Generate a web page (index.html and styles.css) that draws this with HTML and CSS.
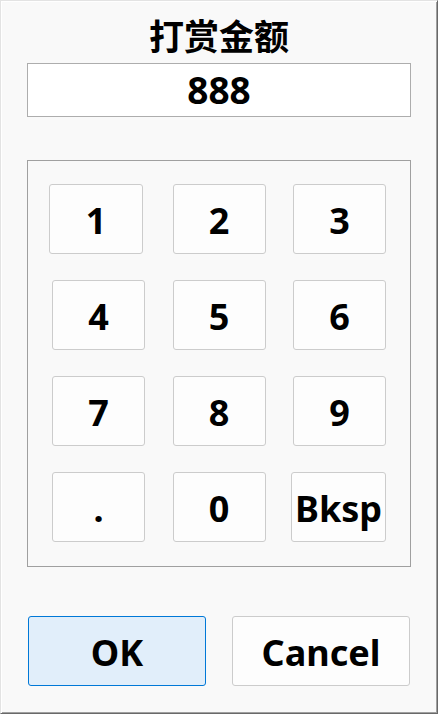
FILE: index.html
```html
<!DOCTYPE html>
<html lang="zh-CN">
<head>
<meta charset="utf-8">
<title>打赏金额</title>
<link rel="stylesheet" href="styles.css">
</head>
<body>
<div class="dialog">
  <h1 class="dialog-title">打赏金额</h1>
  <div class="amount-field">888</div>
  <div class="keypad">
    <button class="key key-first">1</button>
    <button class="key">2</button>
    <button class="key">3</button>
    <button class="key">4</button>
    <button class="key">5</button>
    <button class="key">6</button>
    <button class="key">7</button>
    <button class="key">8</button>
    <button class="key">9</button>
    <button class="key">.</button>
    <button class="key">0</button>
    <button class="key key-wide">Bksp</button>
  </div>
  <div class="actions">
    <button class="action action-default">OK</button>
    <button class="action">Cancel</button>
  </div>
</div>
</body>
</html>
```

FILE: styles.css
```css
html, body {
  margin: 0;
  padding: 0;
  width: 438px;
  height: 714px;
  overflow: hidden;
}

body {
  font-family: "Noto Sans", "Noto Sans CJK SC", sans-serif;
  color: #000;
}

/* window frame with a raised edge: light top/left, dark bottom/right */
.dialog {
  box-sizing: border-box;
  width: 438px;
  height: 714px;
  background: #f9f9f9;
  border: 1px solid;
  border-color: #e3e3e3 #696969 #696969 #e3e3e3;
  box-shadow: inset 1px 1px 0 #ffffff, inset -1px -1px 0 #a0a0a0;
  padding: 0 26px;
  display: flex;
  flex-direction: column;
}

.dialog-title {
  margin: 13px 0 0;
  height: 42px;
  font-family: "Noto Sans CJK SC", sans-serif;
  font-weight: 700;
  font-size: 35px;
  line-height: 42px;
  text-align: center;
}

.amount-field {
  margin-top: 7px;
  box-sizing: border-box;
  height: 54px;
  background: #fff;
  border: 1px solid #adadad;
  font-weight: 700;
  font-size: 37px;
  line-height: 52px;
  text-align: center;
}

.keypad {
  margin-top: 43px;
  box-sizing: border-box;
  height: 407px;
  border: 1px solid #a0a0a0;
  padding: 23px 24px 24px;
  display: grid;
  grid-template-columns: repeat(3, 93px);
  grid-template-rows: repeat(4, 70px);
  justify-content: space-between;
  row-gap: 26px;
}

.key,
.action {
  box-sizing: border-box;
  margin: 0;
  padding: 0;
  font-family: "Noto Sans", sans-serif;
  font-weight: 700;
  font-size: 36px;
  color: #000;
  background: #fdfdfd;
  border: 1px solid #cccccc;
  border-radius: 3px;
  display: flex;
  align-items: center;
  justify-content: center;
  padding-top: 3px;
}

.key {
  width: 93px;
  height: 70px;
}

.key-first {
  width: 94px;
  margin-left: -3px;
}

.key-wide {
  width: 95px;
  margin-left: -2px;
}

.actions {
  margin-top: 49px;
  padding: 0 1px;
  display: flex;
  justify-content: space-between;
}

.action {
  width: 178px;
  height: 70px;
}

.action-default {
  background: #e1eefa;
  border-color: #0078d7;
}
```
